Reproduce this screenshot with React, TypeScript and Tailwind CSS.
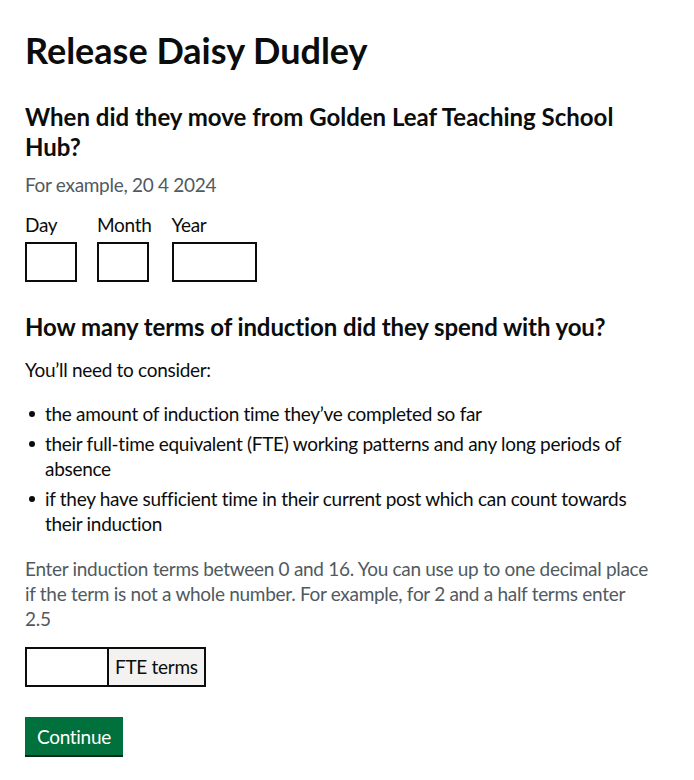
const DateField = ({ label, width }: { label: string; width: string }) => (
  <div className="flex flex-col">
    <label className="mb-[5px] text-[19px] leading-[25px]">{label}</label>
    <input
      type="text"
      className={`h-10 ${width} border-2 border-[#0b0c0c] bg-white px-[5px] outline-none`}
    />
  </div>
);

const bullets = [
  'the amount of induction time they’ve completed so far',
  'their full-time equivalent (FTE) working patterns and any long periods of absence',
  'if they have sufficient time in their current post which can count towards their induction',
];

export default function App() {
  return (
    <main className="min-h-screen bg-white px-[25px] pt-[30px] font-['Lato','Liberation_Sans',sans-serif] text-[#0b0c0c]">
      <div className="max-w-[630px]">
        <h1 className="text-[36px] font-bold leading-[40px]">Release Daisy Dudley</h1>

        <fieldset className="mt-[32px]">
          <legend className="text-[24px] font-bold leading-[30px]">
            When did they move from Golden Leaf Teaching School Hub?
          </legend>
          <p className="mt-[10px] text-[19px] leading-[25px] tracking-[-0.3px] text-[#505a5f]">
            For example, 20 4 2024
          </p>
          <div className="mt-[15px] flex gap-5 tracking-[-0.3px]">
            <DateField label="Day" width="w-[52px]" />
            <DateField label="Month" width="w-[52px]" />
            <DateField label="Year" width="w-[85px]" />
          </div>
        </fieldset>

        <h2 className="mt-[30px] text-[24px] font-bold leading-[30px] tracking-[-0.1px]">
          How many terms of induction did they spend with you?
        </h2>
        <p className="mt-[15px] text-[19px] leading-[25px] tracking-[-0.3px]">You’ll need to consider:</p>
        <ul className="mt-[19px] flex flex-col gap-[5px] pl-5 text-[19px] leading-[25px] tracking-[-0.3px]">
          {bullets.map((b) => (
            <li key={b} className="relative">
              <span className="absolute left-[-16px] top-[10px] h-[6px] w-[6px] rounded-full bg-[#0b0c0c]" />
              {b}
            </li>
          ))}
        </ul>

        <p className="mt-5 text-[19px] leading-[25px] tracking-[-0.3px] text-[#505a5f]">
          Enter induction terms between 0 and 16. You can use up to one decimal place if the term is not a
          whole number. For example, for 2 and a half terms enter
          <br />
          2.5
        </p>

        <div className="mt-[16px] flex h-10 tracking-[-0.3px]">
          <input
            type="text"
            className="h-10 w-[84px] border-2 border-[#0b0c0c] bg-white px-[5px] outline-none"
          />
          <div className="flex h-10 items-center border-2 border-l-0 border-[#0b0c0c] bg-[#f3f2f1] px-[6px] text-[19px]">
            FTE terms
          </div>
        </div>

        <button className="mt-[30px] h-[38px] bg-[#00703c] px-3 text-[19px] leading-[25px] tracking-[-0.3px] text-white shadow-[0_2px_0_#002d18]">
          Continue
        </button>
      </div>
    </main>
  );
}
